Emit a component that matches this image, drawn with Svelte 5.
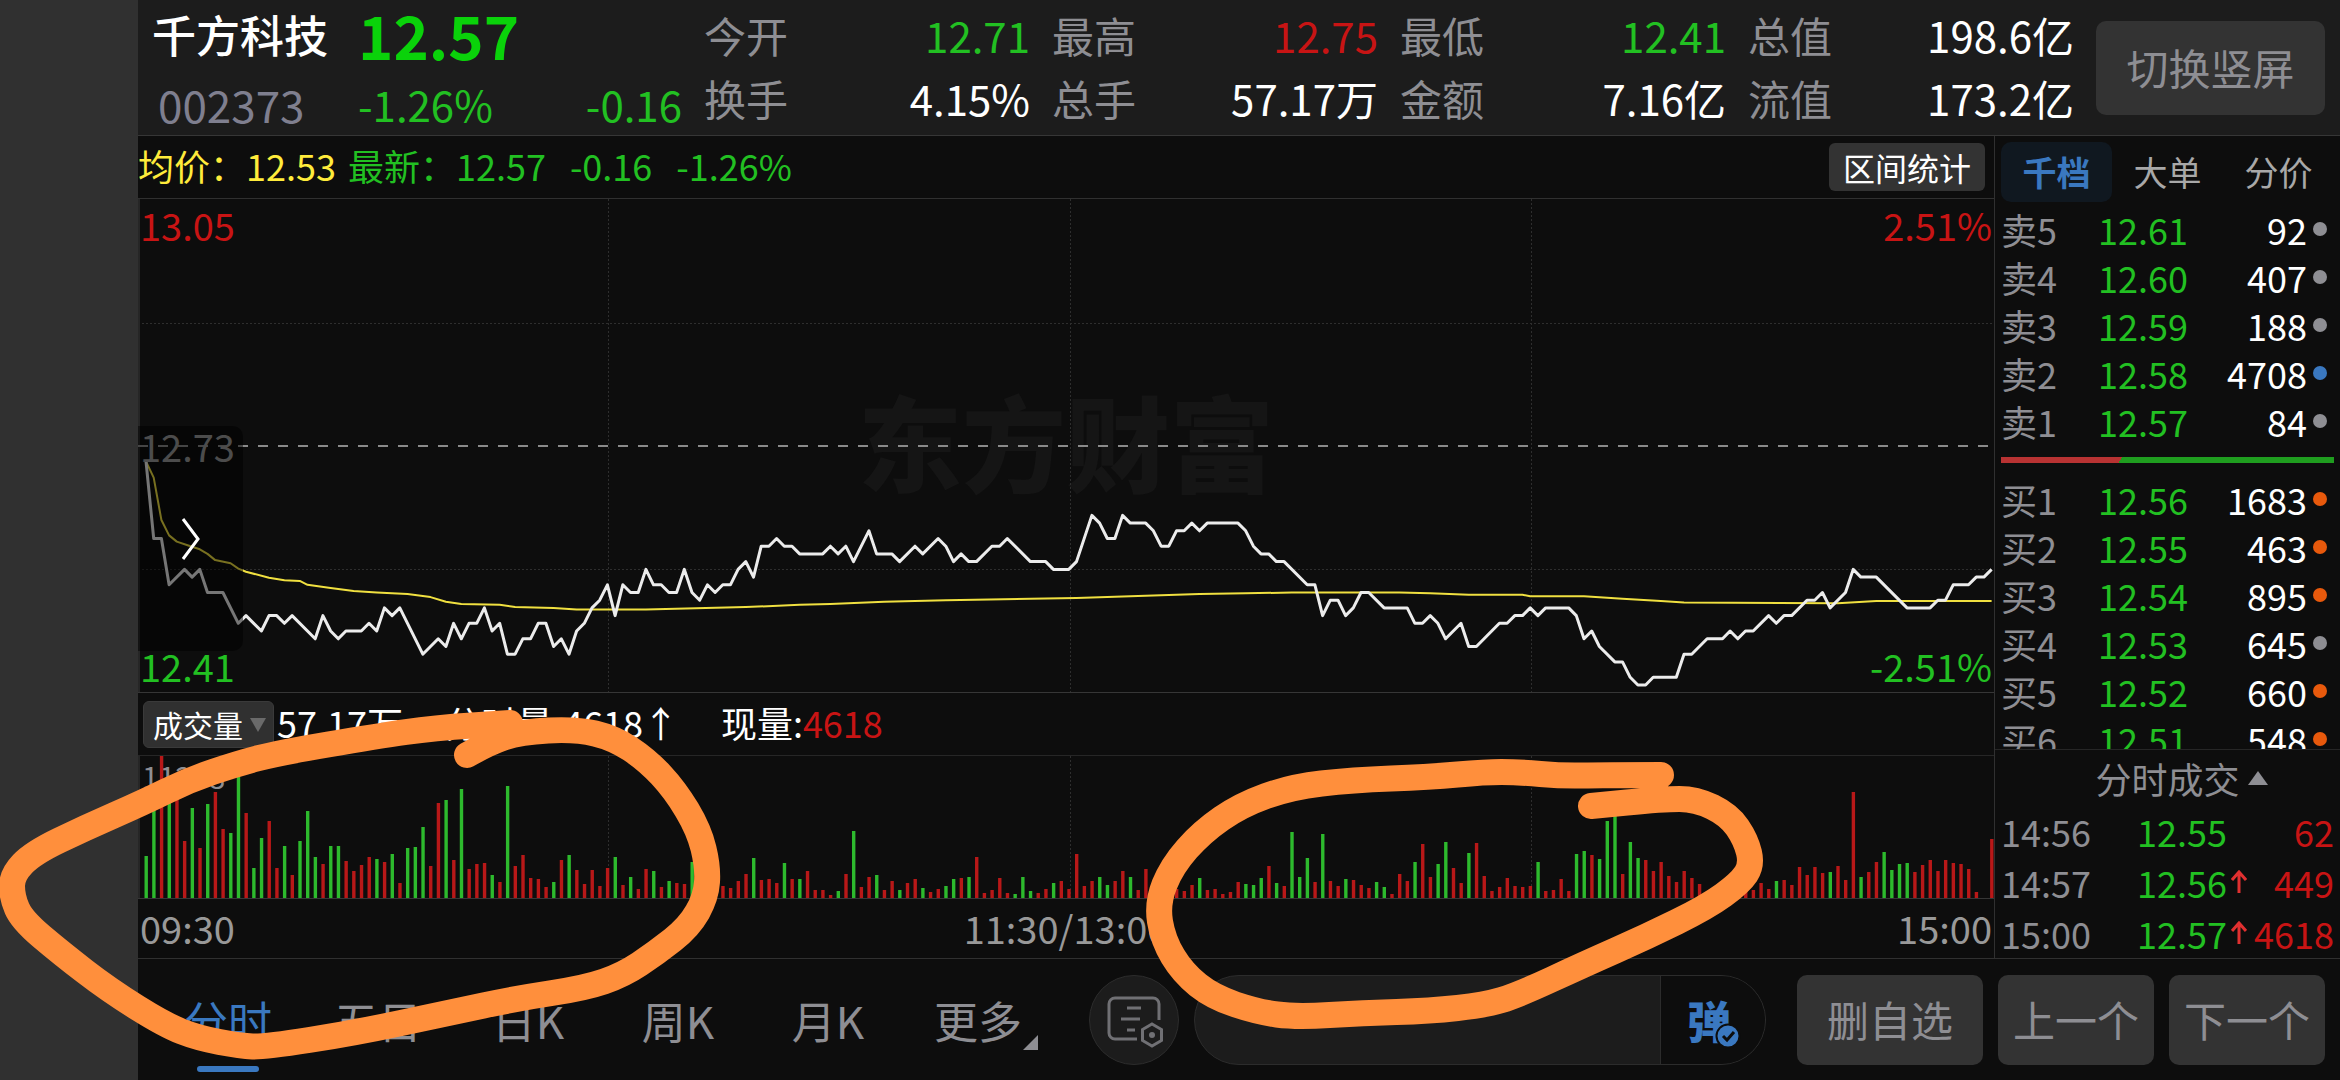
<script lang="ts">
  /**
   * Landscape intraday view: quote header, minute chart, volume bars,
   * order book on the right and the period toolbar at the bottom.
   */
  type Point = [number, number];
  type Tone = 'up' | 'down' | 'flat';
  type Stat = { label: string; value: string; tone: Tone };
  type Level = { name: string; price: string; size: number; dot: string };

  const STATS: Stat[] = [
    { label: '今开', value: '12.71', tone: 'down' },
    { label: '最高', value: '12.75', tone: 'up' },
    { label: '最低', value: '12.41', tone: 'down' },
    { label: '总值', value: '198.6亿', tone: 'flat' },
    { label: '换手', value: '4.15%', tone: 'flat' },
    { label: '总手', value: '57.17万', tone: 'flat' },
    { label: '金额', value: '7.16亿', tone: 'flat' },
    { label: '流值', value: '173.2亿', tone: 'flat' },
  ];

  const ASKS: Level[] = [
    { name: '卖5', price: '12.61', size: 92, dot: 'grey' },
    { name: '卖4', price: '12.60', size: 407, dot: 'grey' },
    { name: '卖3', price: '12.59', size: 188, dot: 'grey' },
    { name: '卖2', price: '12.58', size: 4708, dot: 'blue' },
    { name: '卖1', price: '12.57', size: 84, dot: 'grey' },
  ];

  const BIDS: Level[] = [
    { name: '买1', price: '12.56', size: 1683, dot: 'orange' },
    { name: '买2', price: '12.55', size: 463, dot: 'orange' },
    { name: '买3', price: '12.54', size: 895, dot: 'orange' },
    { name: '买4', price: '12.53', size: 645, dot: 'grey' },
    { name: '买5', price: '12.52', size: 660, dot: 'orange' },
    { name: '买6', price: '12.51', size: 548, dot: 'orange' },
  ];

  const TRADES = [
    { time: '14:56', price: '12.55', size: 62, rising: false },
    { time: '14:57', price: '12.56', size: 449, rising: true },
    { time: '15:00', price: '12.57', size: 4618, rising: true },
  ];

  const BOOK_TABS = ['千档', '大单', '分价'];
  const PERIODS = ['分时', '五日', '日K', '周K', '月K', '更多'];

  // [minute, cents below the previous close]
  const PRICE: Point[] = [
    [0, 2], [1, 12], [2, 12], [3, 18], [5, 16], [6, 17], [7, 16], [8, 19], [10, 19], [12, 23],
    [13, 22], [15, 24], [16, 22], [17, 22], [18, 23], [19, 22], [22, 25], [23, 22], [24, 24], [25, 25],
    [26, 24], [28, 24], [29, 23], [30, 24], [31, 21], [32, 22], [33, 21], [36, 27], [38, 25], [39, 26],
    [40, 23], [41, 25], [42, 23], [43, 23], [44, 21], [45, 24], [46, 23], [47, 27], [48, 27], [49, 25],
    [50, 25], [51, 23], [52, 23], [53, 26], [54, 25], [55, 27], [56, 24], [57, 23], [58, 21], [59, 20],
    [60, 18], [61, 22], [62, 18], [63, 19], [64, 19], [65, 16], [66, 18], [67, 18], [68, 19], [69, 19],
    [70, 16], [71, 19], [72, 20], [73, 18], [74, 19], [75, 18], [76, 18], [77, 16], [78, 15], [79, 17],
    [80, 13], [81, 13], [82, 12], [83, 13], [84, 13], [85, 14], [88, 14], [89, 13], [90, 14], [91, 13],
    [92, 15], [94, 11], [95, 14], [97, 14], [98, 15], [100, 13], [101, 14], [103, 12], [104, 13], [105, 15],
    [106, 14], [107, 15], [108, 15], [110, 13], [111, 13], [112, 12], [115, 15], [117, 15], [118, 16], [120, 16],
    [121, 15], [123, 9], [124, 10], [125, 12], [126, 12], [127, 9], [128, 10], [130, 10], [131, 11], [132, 13],
    [133, 13], [134, 11], [135, 11], [136, 10], [137, 11], [138, 10], [142, 10], [143, 11], [144, 13], [145, 14],
    [146, 14], [147, 15], [148, 15], [151, 18], [152, 18], [153, 22], [154, 20], [155, 20], [156, 22], [157, 21],
    [158, 19], [159, 19], [161, 21], [164, 21], [165, 23], [166, 23], [167, 22], [168, 23], [169, 25], [171, 23],
    [172, 26], [173, 26], [176, 23], [177, 23], [178, 22], [179, 22], [180, 21], [181, 22], [182, 21], [185, 21],
    [186, 22], [187, 25], [188, 24], [189, 26], [191, 28], [192, 28], [193, 30], [194, 31], [195, 31], [196, 30],
    [199, 30], [200, 27], [201, 27], [203, 25], [205, 25], [206, 24], [207, 25], [208, 24], [209, 24], [211, 22],
    [212, 23], [213, 22], [214, 22], [216, 20], [217, 20], [218, 19], [219, 21], [221, 19], [222, 16], [223, 17],
    [225, 17], [229, 21], [232, 21], [233, 20], [234, 20], [235, 18], [237, 18], [238, 17], [239, 17], [240, 16],
  ];

  const AVERAGE: Point[] = [
    [0, 2], [1, 4.1], [2, 9.6], [3, 11.6], [4, 12.4], [5.5, 12.9], [7, 13.4], [8, 14], [9, 14.8], [11, 15.2],
    [12, 15.9], [13, 16.3], [16, 17.1], [18, 17.4], [20, 17.5], [21, 18], [24, 18.4], [27, 18.8], [30, 19], [34, 19.2],
    [37, 19.6], [39, 20.2], [41, 20.5], [46, 20.6], [48, 20.9], [53, 21], [56, 21.2], [65, 21.2], [78, 20.9], [85, 20.6],
    [89, 20.5], [96, 20.2], [104, 20], [115, 19.8], [121, 19.7], [128, 19.5], [137, 19.2], [143, 19.1], [149, 19], [163, 19],
    [167, 19.1], [172, 19.3], [179, 19.3], [180, 19.5], [187, 19.5], [192, 19.8], [197, 20.1], [200, 20.3], [220, 20.4], [225, 20.1],
    [240, 20.1],
  ];

  // one entry per minute from 09:30; negative means the price fell
  const VOLUME = [
    -42, -113, 142, -100, 100, 57, -90, 50, -94, 106, 69, -65, -122, 85, -30, -60, 77, 30, -52, 23,
    -57, -87, -41, 34, -52, -52, 37, 27, 33, 41, -39, 36, -44, 15, -50, -51, -71, 32, 95, -98,
    38, -109, 29, 34, 35, -23, 16, -112, 32, 43, 20, 19, 11, -16, 38, -43, 28, 14, 28, 12,
    30, -41, 13, -21, 9, 29, -27, 11, -17, 15, 14, -36, 10, 12, 9, 12, 10, 17, 24, -40,
    18, 19, 15, -35, 19, -19, 27, 8, 8, 3, -7, 24, -67, 11, 21, -23, 8, 17, -8, 15,
    19, -10, 6, 9, -12, -19, 20, -21, 41, 5, 8, 20, 5, -4, -21, -7, 5, 9, -15, 17,
    9, 44, 12, 17, -21, -13, 17, 27, -21, 8, 29, 10, 8, 10, 9, 7, 13, -20, 8, 9,
    4, 6, 16, -14, -13, -20, 32, -15, 12, -66, -21, -40, 16, -64, 17, 12, -19, 18, 13, 10,
    -16, -11, 4, 24, 17, -36, 54, 21, -34, -56, 30, 15, -45, 55, 22, 7, 11, 20, 12, 11,
    12, -36, 7, 8, 19, 7, -44, -47, 43, -39, -77, -83, 24, -56, -40, 38, 27, 36, 22, 16,
    27, 20, 14, 5, 4, 6, 5, 8, 8, 8, 15, 9, -17, 18, 13, 31, 23, 31, 25, -26,
    32, 18, 106, -21, 26, 36, -46, -28, -34, -35, 26, 33, 38, 27, 38, 35, 34, 29, 6, 0, 59,
  ];

  // freehand marks drawn over the screen
  const MARKS: Point[][] = [
    [
      [467, 755], [488, 743], [520, 732], [576, 729], [614, 738], [647, 760], [675, 790], [699, 830], [708, 867],
      [706, 897], [689, 927], [656, 953], [623, 975], [585, 988], [519, 998], [448, 1013], [354, 1033], [264, 1047],
      [241, 1046], [198, 1038], [165, 1025], [109, 990], [61, 953], [22, 920], [12, 897], [12, 875], [33, 853],
      [85, 828], [142, 803], [189, 780], [236, 764], [278, 753], [378, 736], [434, 728], [510, 723],
    ],
    [
      [1661, 775], [1602, 775], [1563, 776], [1518, 772], [1485, 772], [1430, 777], [1352, 780], [1291, 787],
      [1241, 805], [1202, 832], [1172, 866], [1157, 903], [1163, 940], [1183, 973], [1213, 997], [1258, 1012],
      [1296, 1017], [1363, 1013], [1430, 1011], [1485, 1005], [1518, 995], [1585, 964], [1646, 937], [1707, 907],
      [1740, 883], [1752, 865], [1746, 840], [1729, 815], [1696, 799], [1663, 799], [1591, 806],
    ],
  ];

  const MINUTE = 7.69;
  const CENT = 7.71;
  const START = 8;

  const toLine = (points: Point[]) =>
    points.map(([m, c]) => `${(START + m * MINUTE).toFixed(1)},${(247 + c * CENT).toFixed(1)}`).join(' ');

  function toBrush(points: Point[]) {
    let d = `M${points[0]}`;
    for (let i = 1; i < points.length - 1; i++) {
      const [x, y] = points[i];
      const [nx, ny] = points[i + 1];
      d += ` Q${x} ${y} ${(x + nx) / 2} ${(y + ny) / 2}`;
    }
    return `${d} L${points[points.length - 1]}`;
  }

  let bookTab = $state('千档');
  let period = $state('分时');
  let indicator = $state('成交量');
  let comment = $state('');
</script>

{#snippet levels(rows: Level[], caption: string)}
  <table class="levels" aria-label={caption}>
    <tbody>
      {#each rows as row (row.name)}
        <tr>
          <th scope="row">{row.name}</th>
          <td class="level-price down">{row.price}</td>
          <td class="level-size">{row.size}</td>
          <td class="level-dot"><i class="dot {row.dot}"></i></td>
        </tr>
      {/each}
    </tbody>
  </table>
{/snippet}

<div class="screen">
  <header class="quote">
    <div class="stack">
      <h1 class="name">千方科技</h1>
      <span class="code">002373</span>
    </div>
    <div class="stack">
      <strong class="last down">12.57</strong>
      <div class="change down"><span>-1.26%</span><span>-0.16</span></div>
    </div>
    <dl class="stats">
      {#each STATS as s (s.label)}
        <div class="stat">
          <dt>{s.label}</dt>
          <dd class={s.tone}>{s.value}</dd>
        </div>
      {/each}
    </dl>
    <button class="btn rotate">切换竖屏</button>
  </header>

  <div class="body">
    <main class="charts">
      <div class="info">
        <p class="legend">
          <span class="avg">均价：12.53</span>
          <span class="down">最新：12.57</span>
          <span class="down second">-0.16</span>
          <span class="down second">-1.26%</span>
        </p>
        <button class="range">区间统计</button>
      </div>

      <section class="chart" aria-label="分时走势">
        <span class="watermark">东方财富</span>
        <svg class="plot" viewBox="0 0 1856 493" preserveAspectRatio="none" aria-hidden="true">
          <g class="grid">
            <line x1="470" y1="0" x2="470" y2="493" />
            <line x1="932" y1="0" x2="932" y2="493" />
            <line x1="1393" y1="0" x2="1393" y2="493" />
            <line x1="0" y1="124" x2="1856" y2="124" />
            <line x1="0" y1="370" x2="1856" y2="370" />
          </g>
          <line class="edge" x1="1" y1="0" x2="1" y2="493" />
          <line class="close" x1="0" y1="247" x2="1856" y2="247" />
          <polyline class="avg-line" points={toLine(AVERAGE)} />
          <polyline class="price-line" points={toLine(PRICE)} />
        </svg>
        <div class="scale">
          <span class="up">13.05</span>
          <span class="mid">12.73</span>
          <span class="down">12.41</span>
        </div>
        <div class="scale right">
          <span class="up">2.51%</span>
          <span class="down">-2.51%</span>
        </div>
        <button class="expand" aria-label="展开">
          <svg width="20" height="44" viewBox="0 0 20 44"><path d="M2 2 L17 22 L2 42" /></svg>
        </button>
      </section>

      <div class="volume-head">
        <div class="picker">
          <select bind:value={indicator} aria-label="指标">
            <option>成交量</option>
          </select>
          <svg class="caret" width="16" height="14" viewBox="0 0 16 14"><path d="M0 0H16L8 14Z" /></svg>
        </div>
        <p class="volume-text">
          <span>57.17万</span>
          <span>分时量:4618↑</span>
          <span>现量:<b class="up">4618</b></span>
        </p>
      </div>

      <section class="volume" aria-label="成交量">
        <span class="peak">11238</span>
        <svg class="plot" viewBox="0 0 1856 142" preserveAspectRatio="none" aria-hidden="true">
          <g class="grid">
            <line x1="470" y1="0" x2="470" y2="142" />
            <line x1="932" y1="0" x2="932" y2="142" />
            <line x1="1393" y1="0" x2="1393" y2="142" />
          </g>
          <line class="edge" x1="1" y1="0" x2="1" y2="142" />
          {#each VOLUME as v, i}
            <rect
              class={v < 0 ? 'fall' : 'rise'}
              x={START + i * MINUTE - 1.5}
              y={142 - Math.abs(v)}
              width="3.4"
              height={Math.abs(v)}
            />
          {/each}
        </svg>
      </section>

      <div class="axis">
        <span>09:30</span>
        <span>11:30/13:00</span>
        <span>15:00</span>
      </div>
    </main>

    <aside class="side">
      <div class="book-tabs">
        {#each BOOK_TABS as t}
          <button class:active={t === bookTab} onclick={() => (bookTab = t)}>{t}</button>
        {/each}
      </div>
      <div class="book">
        {@render levels(ASKS, '卖盘')}
        <div class="ratio"></div>
        {@render levels(BIDS, '买盘')}
      </div>
      <button class="trades-title">
        <span>分时成交</span>
        <svg width="20" height="14" viewBox="0 0 20 14"><path d="M10 0L20 14H0Z" /></svg>
      </button>
      <table class="trades" aria-label="分时成交">
        <tbody>
          {#each TRADES as t (t.time)}
            <tr>
              <th scope="row">{t.time}</th>
              <td class="trade-price down">{t.price}</td>
              <td class="trade-arrow">
                {#if t.rising}
                  <svg width="16" height="24" viewBox="0 0 16 24"><path d="M8 23V2M1 10L8 2L15 10" /></svg>
                {/if}
              </td>
              <td class="trade-size up">{t.size}</td>
            </tr>
          {/each}
        </tbody>
      </table>
    </aside>
  </div>

  <footer class="toolbar">
    <nav class="periods">
      {#each PERIODS as p}
        <button class:active={p === period} onclick={() => (period = p)}>
          {p}
          {#if p === '更多'}
            <svg class="corner" width="15" height="15" viewBox="0 0 15 15"><path d="M15 0V15H0Z" /></svg>
          {/if}
        </button>
      {/each}
    </nav>
    <button class="note" aria-label="设置">
      <svg width="60" height="60" viewBox="0 0 60 60">
        <path d="M33 49H11a6 6 0 0 1-6-6V14a6 6 0 0 1 6-6H49a6 6 0 0 1 6 6V30" />
        <path d="M23 18H37M17 29H36M23 40H31" />
        <path d="M48 34L57.500 39.500V50.500L48 56L38.500 50.500V39.500Z" />
        <circle cx="48" cy="45" r="3" />
      </svg>
    </button>
    <div class="danmu">
      <input type="text" aria-label="弹幕" bind:value={comment} />
      <button class="danmu-toggle" aria-label="弹幕开关">
        <span>弹</span>
        <svg class="badge" width="26" height="26" viewBox="0 0 26 26">
          <circle cx="13" cy="13" r="11.500" />
          <path d="M8 13L12 17L19 9" />
        </svg>
      </button>
    </div>
    <button class="btn wide">删自选</button>
    <button class="btn">上一个</button>
    <button class="btn">下一个</button>
  </footer>

  <svg class="marks" viewBox="0 0 2340 1080" preserveAspectRatio="none" aria-hidden="true">
    {#each MARKS as mark}
      <path d={toBrush(mark)} />
    {/each}
  </svg>
</div>

<style>
  :global(body) {
    margin: 0;
    background: #303030;
  }
  .screen {
    position: relative;
    box-sizing: border-box;
    display: flex;
    flex-direction: column;
    height: 100vh;
    padding-left: 138px;
    overflow: hidden;
    font-family: 'Noto Sans CJK SC', sans-serif;
    font-size: 36px;
    color: #fff;
  }
  button,
  input,
  select {
    margin: 0;
    padding: 0;
    border: 0;
    font: inherit;
    color: inherit;
    background: none;
  }
  button { cursor: pointer; }
  h1, p, dl, dd { margin: 0; }
  svg { display: block; }
  .up { color: #c81414; }
  .down { color: #22c022; }
  .flat { color: #fff; }

  .btn {
    width: 156px;
    padding-bottom: 4px;
    border-radius: 10px;
    background: #333;
    color: #8e8e93;
    font-size: 42px;
  }
  .btn.wide { width: 186px; }

  /* quote header */
  .quote {
    box-sizing: border-box;
    display: flex;
    gap: 22px;
    height: 136px;
    padding: 3px 15px 0 14px;
    background: #1c1c1c;
    border-bottom: 1px solid #363636;
    font-size: 42px;
  }
  .stack {
    display: flex;
    flex-direction: column;
    gap: 8px;
    line-height: 62px;
  }
  .name {
    width: 184px;
    font-size: 44px;
    font-weight: 500;
  }
  .code {
    padding-left: 6px;
    font-size: 44px;
    color: #7f7f8f;
  }
  .last {
    font-size: 60px;
    font-weight: 700;
    color: #0ad20a;
  }
  .change {
    display: flex;
    justify-content: space-between;
    width: 324px;
  }
  .stats {
    flex: 1;
    display: grid;
    grid-template-columns: repeat(4, 1fr);
    column-gap: 22px;
    align-content: start;
    line-height: 63px;
  }
  .stat {
    display: flex;
    justify-content: space-between;
  }
  .stat dt { color: #8e8e93; }
  .rotate {
    width: 229px;
    height: 94px;
    margin-top: 18px;
  }

  .body {
    flex: 1;
    min-height: 0;
    display: grid;
    grid-template-columns: 1fr 346px;
    background: #0d0d0d;
  }
  .charts {
    display: flex;
    flex-direction: column;
    min-width: 0;
    min-height: 0;
  }
  .info {
    box-sizing: border-box;
    display: flex;
    align-items: center;
    justify-content: space-between;
    height: 63px;
    padding-right: 9px;
    border-bottom: 1px solid #303030;
  }
  .legend {
    display: flex;
    gap: 12px;
    padding-bottom: 4px;
    line-height: 48px;
  }
  .second { margin-left: 12px; }
  .avg { color: #ffeb3b; }
  .range {
    width: 156px;
    height: 48px;
    border-radius: 6px;
    background: #333;
    font-size: 32px;
    line-height: 46px;
  }

  /* minute chart, layers share one grid cell */
  .chart {
    position: relative;
    box-sizing: border-box;
    flex: 1;
    min-height: 0;
    display: grid;
    grid-template: minmax(0, 1fr) / minmax(0, 1fr);
    border-bottom: 1px solid #363636;
    font-size: 38px;
    line-height: 40px;
  }
  .chart > * { grid-area: 1 / 1; }
  .plot {
    width: 100%;
    height: 100%;
  }
  .watermark {
    place-self: center;
    padding-bottom: 12px;
    font-size: 104px;
    font-weight: 900;
    line-height: 116px;
    color: #151515;
  }
  .grid line {
    stroke: #2e2e2e;
    stroke-width: 1;
    stroke-dasharray: 2 2;
    shape-rendering: crispEdges;
  }
  .edge {
    stroke: #262626;
    stroke-width: 2;
  }
  .close {
    stroke: #8a8a8a;
    stroke-width: 2;
    stroke-dasharray: 10 10;
  }
  .avg-line,
  .price-line {
    fill: none;
    stroke: #f0e040;
    stroke-width: 2;
    stroke-linejoin: round;
  }
  .price-line {
    stroke: #ececec;
    stroke-width: 3;
  }
  .scale {
    display: flex;
    flex-direction: column;
    justify-content: space-between;
    padding: 6px 2px;
  }
  .right { text-align: right; }
  .mid { color: #999; }
  .expand {
    place-self: center start;
    display: grid;
    place-items: center;
    width: 105px;
    height: 225px;
    margin-top: 186px;
    border-radius: 0 10px 10px 0;
    background: rgba(0, 0, 0, 0.5);
  }
  .expand path {
    fill: none;
    stroke: #fff;
    stroke-width: 3;
  }

  /* volume */
  .volume-head {
    box-sizing: border-box;
    display: flex;
    align-items: center;
    gap: 3px;
    height: 63px;
    padding-left: 5px;
    border-bottom: 1px solid #262626;
  }
  .picker { position: relative; }
  .picker select {
    display: block;
    box-sizing: border-box;
    width: 131px;
    height: 47px;
    padding: 0 0 4px 9px;
    border: 1px solid #3a3a3a;
    border-radius: 6px;
    background: #303030;
    font-size: 30px;
    appearance: none;
  }
  .caret {
    position: absolute;
    right: 8px;
    top: 17px;
    fill: #6a6a6a;
    pointer-events: none;
  }
  .volume-text {
    display: flex;
    gap: 42px;
    padding-bottom: 4px;
    line-height: 48px;
  }
  .volume-text b { font-weight: 400; }
  .volume {
    box-sizing: border-box;
    display: grid;
    height: 143px;
    border-bottom: 1px solid #363636;
  }
  .volume > * { grid-area: 1 / 1; }
  .volume .plot { height: 142px; }
  .peak {
    padding: 2px 4px;
    font-size: 30px;
    line-height: 36px;
    color: #8e8e93;
  }
  .fall { fill: #2dba2d; }
  .rise { fill: #b81818; }
  .axis {
    display: flex;
    justify-content: space-between;
    padding: 0 2px 2px;
    font-size: 38px;
    line-height: 57px;
    color: #999;
  }

  /* order book */
  .side {
    display: flex;
    flex-direction: column;
    min-height: 0;
    padding: 6px 6px 0;
    border-left: 1px solid #303030;
  }
  .book-tabs {
    display: grid;
    grid-template-columns: repeat(3, 1fr);
    height: 60px;
    margin-bottom: 3px;
    font-size: 34px;
    color: #a8a8a8;
  }
  .book-tabs button {
    border-radius: 10px;
    line-height: 56px;
  }
  .book-tabs .active {
    background: #101820;
    color: #3a78c0;
    font-weight: 700;
  }
  .book {
    flex: 1 1 0;
    min-height: 0;
    overflow: hidden;
  }
  table {
    width: 100%;
    border-collapse: collapse;
    table-layout: fixed;
  }
  th, td {
    padding: 0;
    text-align: left;
    font-weight: 400;
  }
  th { color: #8e8e93; }
  .levels th, .levels td {
    height: 48px;
    line-height: 48px;
  }
  .levels th { width: 97px; }
  .level-price { width: 100px; }
  .levels .level-size { text-align: right; }
  .level-dot { width: 27px; }
  .dot {
    display: block;
    width: 14px;
    height: 14px;
    margin-left: 6px;
    border-radius: 50%;
  }
  .grey { background: #8e8e93; }
  .blue { background: #3a78c0; }
  .orange { background: #e8590c; }
  .ratio {
    height: 6px;
    margin: 12px 0;
    background: linear-gradient(125deg, #b83232 36%, #1f9d1f 36%);
  }
  .trades-title {
    display: grid;
    grid-template-columns: 1fr auto 1fr;
    align-items: center;
    gap: 8px;
    height: 56px;
    margin: 0 -6px;
    border-top: 1px solid #262626;
    line-height: 50px;
    color: #8e8e93;
  }
  .trades-title span { grid-column: 2; }
  .trades-title svg { fill: #8e8e93; }
  .trades th, .trades td {
    height: 51px;
    line-height: 50px;
  }
  .trades th { width: 136px; }
  .trade-price { width: 94px; }
  .trade-arrow { width: 20px; }
  .trade-arrow path {
    fill: none;
    stroke: #e03030;
    stroke-width: 3;
  }
  .trades .trade-size { text-align: right; }

  /* bottom toolbar */
  .toolbar {
    box-sizing: border-box;
    display: flex;
    gap: 15px;
    height: 122px;
    padding: 16px 15px 15px;
    background: #0d0d0d;
    border-top: 1px solid #303030;
  }
  .periods {
    display: flex;
    margin-right: 21px;
    font-size: 44px;
    color: #8e8e93;
  }
  .periods button {
    position: relative;
    width: 150px;
    line-height: 90px;
  }
  .periods .active { color: #3a78c0; }
  .periods .active::after {
    content: '';
    position: absolute;
    left: 44px;
    bottom: -7px;
    width: 62px;
    height: 6px;
    border-radius: 3px;
    background: #3a78c0;
  }
  .corner {
    position: absolute;
    right: 15px;
    bottom: 15px;
    fill: #8e8e93;
  }
  .note {
    box-sizing: border-box;
    display: grid;
    place-items: center;
    flex: none;
    width: 90px;
    border: 1px solid #2c2c2c;
    border-radius: 50%;
    background: #1c1c1c;
  }
  .note path {
    fill: none;
    stroke: #707074;
    stroke-width: 3;
  }
  .note circle { fill: #707074; }
  .danmu {
    box-sizing: border-box;
    flex: 1;
    display: flex;
    margin-right: 16px;
    border: 1px solid #2c2c2c;
    border-radius: 45px;
    background: #1c1c1c;
    overflow: hidden;
  }
  .danmu input {
    flex: 1;
    min-width: 0;
    padding-left: 40px;
  }
  .danmu-toggle {
    display: flex;
    align-items: center;
    width: 105px;
    padding-left: 26px;
    border-left: 1px solid #2c2c2c;
    background: #0d0d0d;
    color: #3a78c0;
    font-size: 44px;
    font-weight: 900;
  }
  .danmu-toggle span { line-height: 80px; }
  .badge {
    flex: none;
    margin: 32px 0 0 -16px;
  }
  .badge circle {
    fill: #3a78c0;
    stroke: #0d0d0d;
    stroke-width: 2;
  }
  .badge path {
    fill: none;
    stroke: #0d0d0d;
    stroke-width: 3;
  }

  .marks {
    position: absolute;
    inset: 0;
    width: 100%;
    height: 100%;
    pointer-events: none;
  }
  .marks path {
    fill: none;
    stroke: #ff8f3c;
    stroke-width: 26;
    stroke-linecap: round;
    stroke-linejoin: round;
  }
</style>
